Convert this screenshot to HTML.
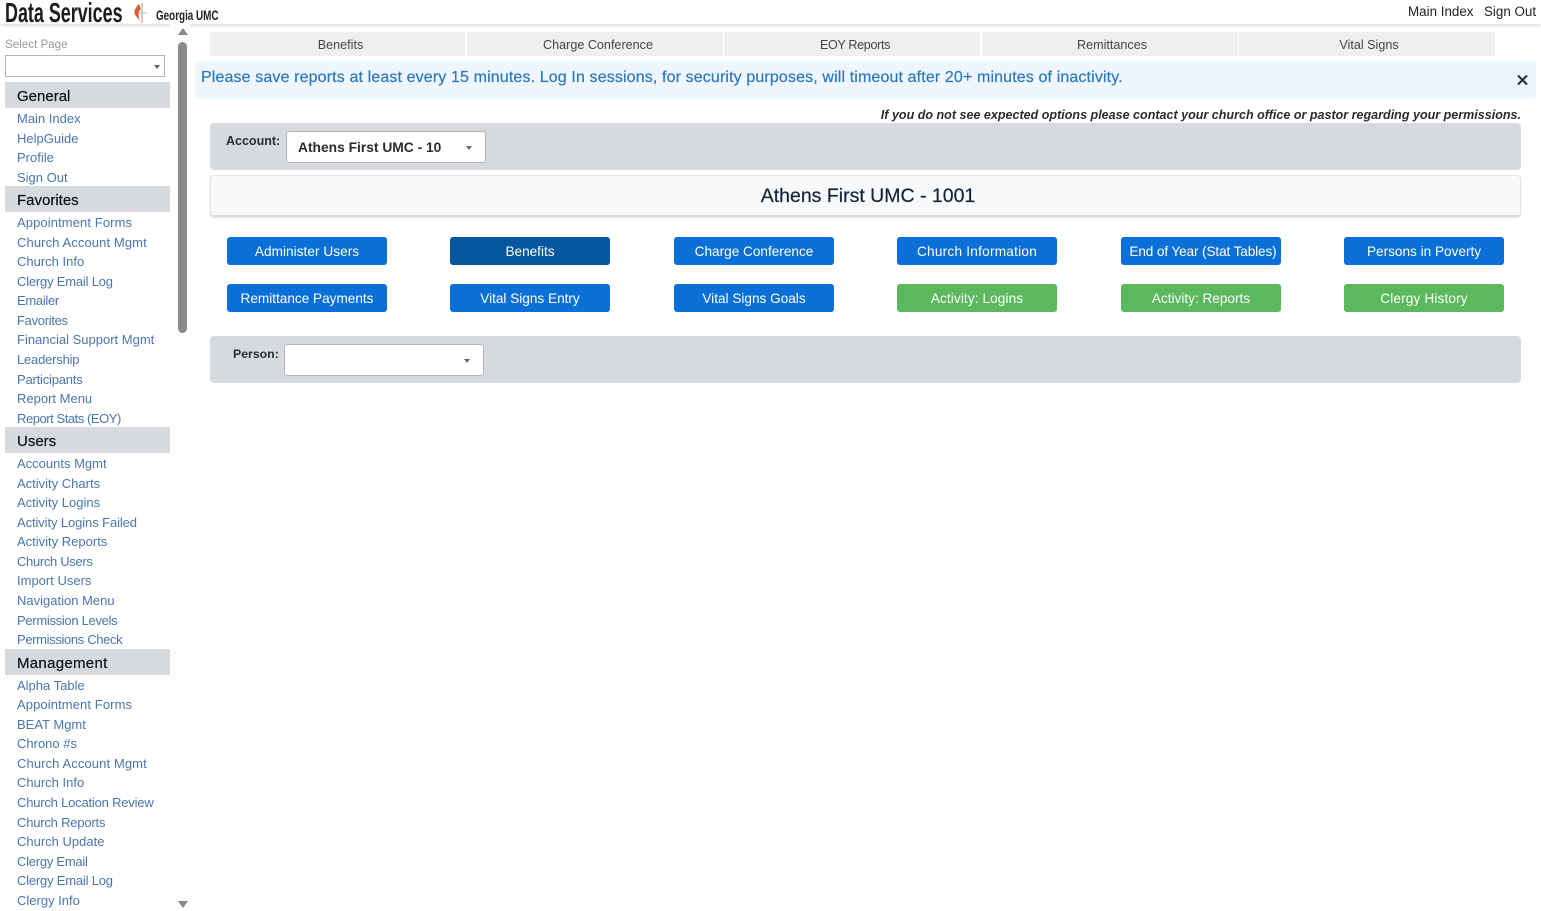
<!DOCTYPE html>
<html><head><meta charset="utf-8"><title>Data Services</title>
<style>
*{box-sizing:border-box}
html,body{margin:0;padding:0;width:1541px;height:911px;overflow:hidden;background:#fff;font-family:"Liberation Sans",sans-serif;color:#212529}
.a{position:absolute;white-space:nowrap}
#top{left:0;top:0;width:1541px;height:24px;background:#fff;box-shadow:0 1px 4px rgba(0,0,0,.18)}
#side{position:absolute;left:5px;top:82px;width:165px;height:829px;overflow:hidden}
#side h4{margin:0;height:26px;line-height:30px;background:#d6dade;padding-left:12px;font-size:15px;font-weight:400;color:#111;-webkit-text-stroke:.2px #111}
#side div{height:19.55px;line-height:21.5px;padding-left:12px;font-size:13px;color:#4a76ae;white-space:nowrap}
.tab{position:absolute;top:32px;height:24px;background:#efefef;text-align:center;line-height:26px;font-size:12.6px;color:#444;padding-left:6px}
.band{position:absolute;left:210px;width:1311px;background:#d6dade;border-radius:4px}
.sel{position:absolute;background:#fff;border:1px solid #b5b5b5;border-radius:3px}
.car{position:absolute;width:0;height:0;border-left:3.5px solid transparent;border-right:3.5px solid transparent;border-top:4px solid #666}
.b{position:absolute;width:160px;height:28px;border-radius:3px;background:#0a6fd6;color:#fff;text-align:center;line-height:29px;font-size:13.6px}
.g{background:#5cb85c}
.d{background:#04569f}
.r1{top:237px}.r2{top:284px}
</style></head><body>
<div class="a" id="top"></div>
<div class="a" style="left:5px;top:-4px;font-size:28px;font-weight:700;color:#1c1c1c;transform:scaleX(.64);transform-origin:0 0;line-height:34px">Data Services</div>
<svg class="a" style="left:132px;top:2px" width="16" height="22" viewBox="0 0 16 22"><path d="M10 1V21" stroke="#a89a90" stroke-width="1" fill="none"/><path d="M3 11H15" stroke="#c9b9ad" stroke-width="1" fill="none"/><path d="M7 2C2 7 1 11 4 14L8 19C6 14 6 9 9 7C8 5 8 4 7 2Z" fill="#d8603a"/></svg>
<div class="a" style="left:156px;top:6px;font-size:14px;font-weight:700;color:#222;transform:scaleX(.705);transform-origin:0 0;line-height:18px">Georgia UMC</div>
<div class="a" style="left:1408px;top:3px;font-size:13.4px;line-height:18px;color:#222">Main Index</div>
<div class="a" style="left:1484px;top:3px;font-size:13.4px;line-height:18px;color:#222">Sign Out</div>

<div class="a" style="left:5px;top:37px;font-size:11.6px;line-height:16px;color:#999">Select Page</div>
<div class="sel" style="left:5px;top:55px;width:160px;height:22px;border-radius:0"><div class="car" style="left:147.5px;top:9px"></div></div>
<div id="side">
<h4>General</h4><div>Main Index</div><div>HelpGuide</div><div>Profile</div><div>Sign Out</div>
<h4>Favorites</h4><div style="letter-spacing:.1px">Appointment Forms</div><div style="letter-spacing:.1px">Church Account Mgmt</div><div>Church Info</div><div style="letter-spacing:-.2px">Clergy Email Log</div><div style="letter-spacing:-.3px">Emailer</div><div style="letter-spacing:-.3px">Favorites</div><div>Financial Support Mgmt</div><div style="letter-spacing:-.2px">Leadership</div><div style="letter-spacing:-.2px">Participants</div><div>Report Menu</div><div style="letter-spacing:-.45px">Report Stats (EOY)</div>
<h4>Users</h4><div>Accounts Mgmt</div><div>Activity Charts</div><div>Activity Logins</div><div style="letter-spacing:-.1px">Activity Logins Failed</div><div>Activity Reports</div><div style="letter-spacing:-.33px">Church Users</div><div>Import Users</div><div>Navigation Menu</div><div style="letter-spacing:-.3px">Permission Levels</div><div style="letter-spacing:-.35px">Permissions Check</div>
<h4 style="letter-spacing:.3px">Management</h4><div>Alpha Table</div><div style="letter-spacing:.1px">Appointment Forms</div><div>BEAT Mgmt</div><div>Chrono #s</div><div style="letter-spacing:.1px">Church Account Mgmt</div><div>Church Info</div><div style="letter-spacing:-.2px">Church Location Review</div><div style="letter-spacing:-.2px">Church Reports</div><div>Church Update</div><div style="letter-spacing:-.25px">Clergy Email</div><div style="letter-spacing:-.2px">Clergy Email Log</div><div>Clergy Info</div>
</div>
<div class="a" style="left:170px;top:24px;width:20px;height:887px;background:#fdfdfd"></div>
<div class="a" style="left:178px;top:42px;width:9px;height:291px;background:#8a8a8a;border-radius:5px"></div>
<div class="car" style="left:177.5px;top:28px;border-left-width:5px;border-right-width:5px;border-top:0;border-bottom:7px solid #888"></div>
<div class="car" style="left:177.5px;top:901px;border-left-width:5px;border-right-width:5px;border-top:7px solid #888"></div>

<div class="tab" style="left:210px;width:255px">Benefits</div>
<div class="tab" style="left:467px;width:256px">Charge Conference</div>
<div class="tab" style="left:724px;width:256px;letter-spacing:-.35px">EOY Reports</div>
<div class="tab" style="left:982px;width:256px;padding-left:4px">Remittances</div>
<div class="tab" style="left:1239px;width:256px;padding-left:4px">Vital Signs</div>

<div class="a" style="left:195px;top:61px;width:1341px;height:38px;background:#eff6fd;border-radius:4px"></div>
<div class="a" style="left:201px;top:67px;font-size:16px;line-height:21px;color:#2a78c0;letter-spacing:.13px;-webkit-text-stroke:.2px #2a78c0">Please save reports at least every 15 minutes. Log In sessions, for security purposes, will timeout after 20+ minutes of inactivity.</div>
<svg class="a" style="left:1517px;top:74px" width="11" height="12" viewBox="0 0 11 12"><path d="M1 1.5L10 10.5M10 1.5L1 10.5" stroke="#26333f" stroke-width="2.2" fill="none"/></svg>
<div class="a" style="right:20px;top:107px;font-size:12.5px;line-height:16px;font-weight:700;font-style:italic;color:#2b2b2b;letter-spacing:.02px">If you do not see expected options please contact your church office or pastor regarding your permissions.</div>

<div class="band" style="top:123px;height:47px"></div>
<div class="a" style="left:226px;top:133px;font-size:12.5px;line-height:16px;font-weight:700;color:#2b2b2b">Account:</div>
<div class="sel" style="left:286px;top:131px;width:200px;height:32px"></div>
<div class="a" style="left:298px;top:139px;font-size:13.8px;line-height:18px;font-weight:700;color:#2b2b2b">Athens First UMC - 10</div>
<div class="car" style="left:466px;top:146px"></div>

<div class="a" style="left:210px;top:175px;width:1311px;height:42px;background:#f8f9fa;border:1px solid #e2e4e6;border-bottom:2px solid #d8dadc;border-radius:4px;box-shadow:0 1px 2px rgba(0,0,0,.1)"></div>
<div class="a" style="left:210px;top:183px;width:1316px;text-align:center;font-size:19.5px;line-height:27px;color:#13243a;-webkit-text-stroke:.2px #13243a">Athens First UMC - 1001</div>

<div class="b r1" style="left:227px;letter-spacing:.05px">Administer Users</div>
<div class="b r1 d" style="left:450px">Benefits</div>
<div class="b r1" style="left:674px">Charge Conference</div>
<div class="b r1" style="left:897px;letter-spacing:.25px">Church Information</div>
<div class="b r1" style="left:1121px;letter-spacing:-.12px;padding-left:4px">End of Year (Stat Tables)</div>
<div class="b r1" style="left:1344px">Persons in Poverty</div>
<div class="b r2" style="left:227px">Remittance Payments</div>
<div class="b r2" style="left:450px">Vital Signs Entry</div>
<div class="b r2" style="left:674px">Vital Signs Goals</div>
<div class="b r2 g" style="left:897px;letter-spacing:.1px">Activity: Logins</div>
<div class="b r2 g" style="left:1121px">Activity: Reports</div>
<div class="b r2 g" style="left:1344px;letter-spacing:.15px">Clergy History</div>

<div class="band" style="top:336px;height:47px"></div>
<div class="a" style="left:233px;top:346px;font-size:12.3px;line-height:16px;font-weight:700;color:#2b2b2b">Person:</div>
<div class="sel" style="left:284px;top:344px;width:200px;height:32px"></div>
<div class="car" style="left:464px;top:359px"></div>
</body></html>
